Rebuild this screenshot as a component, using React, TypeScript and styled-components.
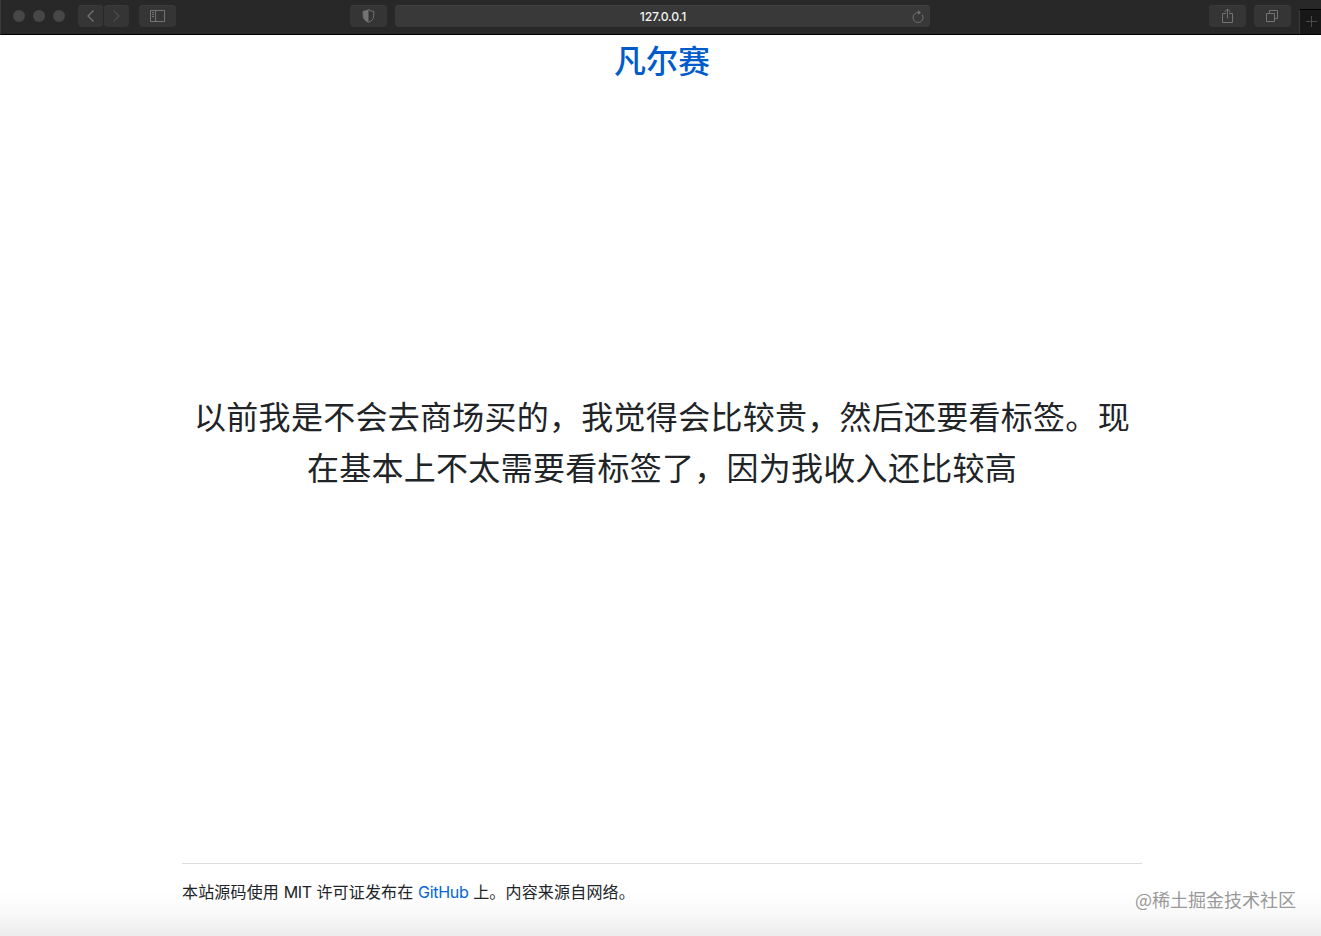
import React from "react";
import styled, { createGlobalStyle } from "styled-components";

const GlobalStyle = createGlobalStyle`
  *, *::before, *::after { box-sizing: border-box; }
  body { margin: 0; background: #fff; overflow: hidden; }
`;

const Window = styled.div`
  width: 1321px;
  height: 936px;
  display: flex;
  flex-direction: column;
  font-family: Inter, "Noto Sans CJK SC", sans-serif;
  color: #212427;
  background: linear-gradient(to bottom, #fff 890px, #fafafa 912px, #ececec 936px);
`;

const Toolbar = styled.header`
  flex: none;
  height: 35px;
  display: flex;
  align-items: flex-start;
  padding-top: 5px;
  background: #282828;
  border-bottom: 1px solid #000;
  border-left: 1px solid #3a3a3a;
`;

const Lights = styled.div`
  display: flex;
  gap: 8px;
  padding: 5px 13px 0 12px;
`;

const Light = styled.span`
  width: 12px;
  height: 12px;
  border-radius: 50%;
  background: #474747;
`;

const ToolButton = styled.button<{ $width: number; $gap?: number; $dim?: boolean }>`
  flex: none;
  width: ${(p) => p.$width}px;
  height: 22px;
  margin: 0 ${(p) => p.$gap ?? 0}px 0 0;
  padding: 0;
  display: flex;
  align-items: center;
  justify-content: center;
  border: 0;
  border-radius: 4px;
  background: #353535;
  box-shadow: inset 0 1px 0 #3b3b3b;
  color: ${(p) => (p.$dim ? "#4c4c4c" : "#737373")};
`;

const AddressBar = styled.div`
  flex: none;
  width: 535px;
  height: 22px;
  display: grid;
  grid-template-columns: 24px 1fr 24px;
  align-items: center;
  justify-items: center;
  border-radius: 4px;
  background: #393939;
  box-shadow: inset 0 1px 0 #404040;
  color: #6f6f6f;
`;

const Address = styled.span`
  grid-column: 2;
  font-size: 12.2px;
  line-height: 22px;
  font-weight: 500;
  letter-spacing: -0.1px;
  color: #f2f2f2;
  padding: 1px 0 0 1px;
`;

const Spacer = styled.div<{ $width: number }>`
  flex: none;
  width: ${(p) => p.$width}px;
`;

const NewTab = styled.div`
  flex: 1;
  height: 25px;
  margin-top: 4px;
  padding: 0 2px 2px 0;
  display: flex;
  align-items: center;
  justify-content: flex-end;
  overflow: hidden;
  background: #181818;
  border-top: 1px solid #000;
  border-left: 1px solid #3a3a3a;
  color: #4c4c4c;
`;

const Page = styled.main`
  flex: 1;
  width: 960px;
  margin-left: 182px;
  display: flex;
  flex-direction: column;
`;

const Title = styled.h1`
  margin: 1px 0 0;
  height: 51px;
  font-size: 32px;
  line-height: 51px;
  font-weight: 500;
  text-align: center;
  color: #005ccb;
`;

const Quote = styled.section`
  flex: 1;
  display: flex;
  flex-direction: column;
  justify-content: center;
  padding-bottom: 64px;
`;

const QuoteLine = styled.p`
  margin: 0;
  font-size: 32px;
  line-height: 51.2px;
  letter-spacing: 0.27px;
  text-align: center;
  white-space: nowrap;
`;

const Footer = styled.footer`
  height: 73px;
  display: flex;
  justify-content: space-between;
  border-top: 1px solid #dcdddf;
`;

const License = styled.p`
  margin: 15px 0 0;
  font-size: 16px;
  line-height: 26px;
  letter-spacing: 0.17px;
  white-space: nowrap;
`;

const Latin = styled.span`
  letter-spacing: -0.35px;
`;

const Link = styled.a`
  color: #0366d6;
  text-decoration: none;
  letter-spacing: -0.3px;
`;

const Watermark = styled.span`
  flex: none;
  margin: 22px -154px 0 0;
  font-family: "Noto Sans CJK SC", sans-serif;
  font-size: 18px;
  font-weight: 400;
  line-height: 26px;
  white-space: nowrap;
  color: #999;
  text-shadow: -1px -1px 0 #fff;
`;

const Chevron = ({ right }: { right?: boolean }) => (
  <svg width="9" height="14" viewBox="0 0 9 14" fill="none" stroke="currentColor" strokeWidth="1.3">
    <path d={right ? "M1.5 1.5 7 7l-5.5 5.5" : "M7.5 1.5 2 7l5.5 5.5"} />
  </svg>
);

const SidebarIcon = () => (
  <svg width="15" height="12" viewBox="0 0 15 12" fill="none" stroke="currentColor">
    <path d="M.5.5h14v11H.5zM5.5.5v11M2 2.5h2M2 4.5h2M2 6.5h2" />
  </svg>
);

const ShieldIcon = () => (
  <svg width="13" height="14" viewBox="0 0 13 14">
    <path d="M6.5.6c1.600 1.100 3.300 1.600 5.300 1.700v4.500c0 2.900-2 5.100-5.300 6.600C3.200 11.900 1.200 9.700 1.200 6.800V2.300C3.200 2.200 4.900 1.700 6.500.6z" fill="none" stroke="currentColor" />
    <path d="M6.500.6v12.800C3.200 11.900 1.200 9.700 1.200 6.800V2.300C3.200 2.200 4.900 1.700 6.500.6z" fill="currentColor" />
  </svg>
);

const ReloadIcon = () => (
  <svg width="14" height="14" viewBox="0 0 14 14" fill="none" stroke="currentColor">
    <path d="M11.300 4.800A5 5 0 1 1 7.500 2.500" />
    <path d="M7 0l3 2.500L7 5z" fill="currentColor" stroke="none" />
  </svg>
);

const ShareIcon = () => (
  <svg width="12" height="16" viewBox="0 0 12 16" fill="none" stroke="currentColor">
    <path d="M4 5.500H.500v9h10v-9H7M5.500 10.500V1M2.500 4l3-3 3 3" />
  </svg>
);

const TabsIcon = () => (
  <svg width="13" height="12" viewBox="0 0 13 12" fill="none" stroke="currentColor">
    <path d="M.5 3.500h8v8h-8zM3.500 3V.500h8v8H9" />
  </svg>
);

const PlusIcon = () => (
  <svg width="14" height="12" viewBox="0 0 14 12" fill="none" stroke="currentColor">
    <path d="M1 6.500h11M6.500 1v11" />
  </svg>
);

export default function App() {
  return (
    <>
      <GlobalStyle />
      <Window>
        <Toolbar>
          <Lights>
            <Light />
            <Light />
            <Light />
          </Lights>
          <ToolButton $width={25} $gap={1} aria-label="Back"><Chevron /></ToolButton>
          <ToolButton $width={25} $gap={10} $dim aria-label="Forward"><Chevron right /></ToolButton>
          <ToolButton $width={37} aria-label="Sidebar"><SidebarIcon /></ToolButton>
          <Spacer $width={174} />
          <ToolButton $width={37} $gap={8} aria-label="Privacy"><ShieldIcon /></ToolButton>
          <AddressBar>
            <Address>127.0.0.1</Address>
            <ReloadIcon />
          </AddressBar>
          <Spacer $width={279} />
          <ToolButton $width={37} $gap={8} aria-label="Share"><ShareIcon /></ToolButton>
          <ToolButton $width={37} $gap={8} aria-label="Tabs"><TabsIcon /></ToolButton>
          <NewTab><PlusIcon /></NewTab>
        </Toolbar>
        <Page>
          <Title>凡尔赛</Title>
          <Quote>
            <QuoteLine>以前我是不会去商场买的，我觉得会比较贵，然后还要看标签。现</QuoteLine>
            <QuoteLine>在基本上不太需要看标签了，因为我收入还比较高</QuoteLine>
          </Quote>
          <Footer>
            <License>
              本站源码使用 <Latin>MIT</Latin> 许可证发布在 <Link>GitHub</Link> 上。内容来源自网络。
            </License>
            <Watermark>@稀土掘金技术社区</Watermark>
          </Footer>
        </Page>
      </Window>
    </>
  );
}
